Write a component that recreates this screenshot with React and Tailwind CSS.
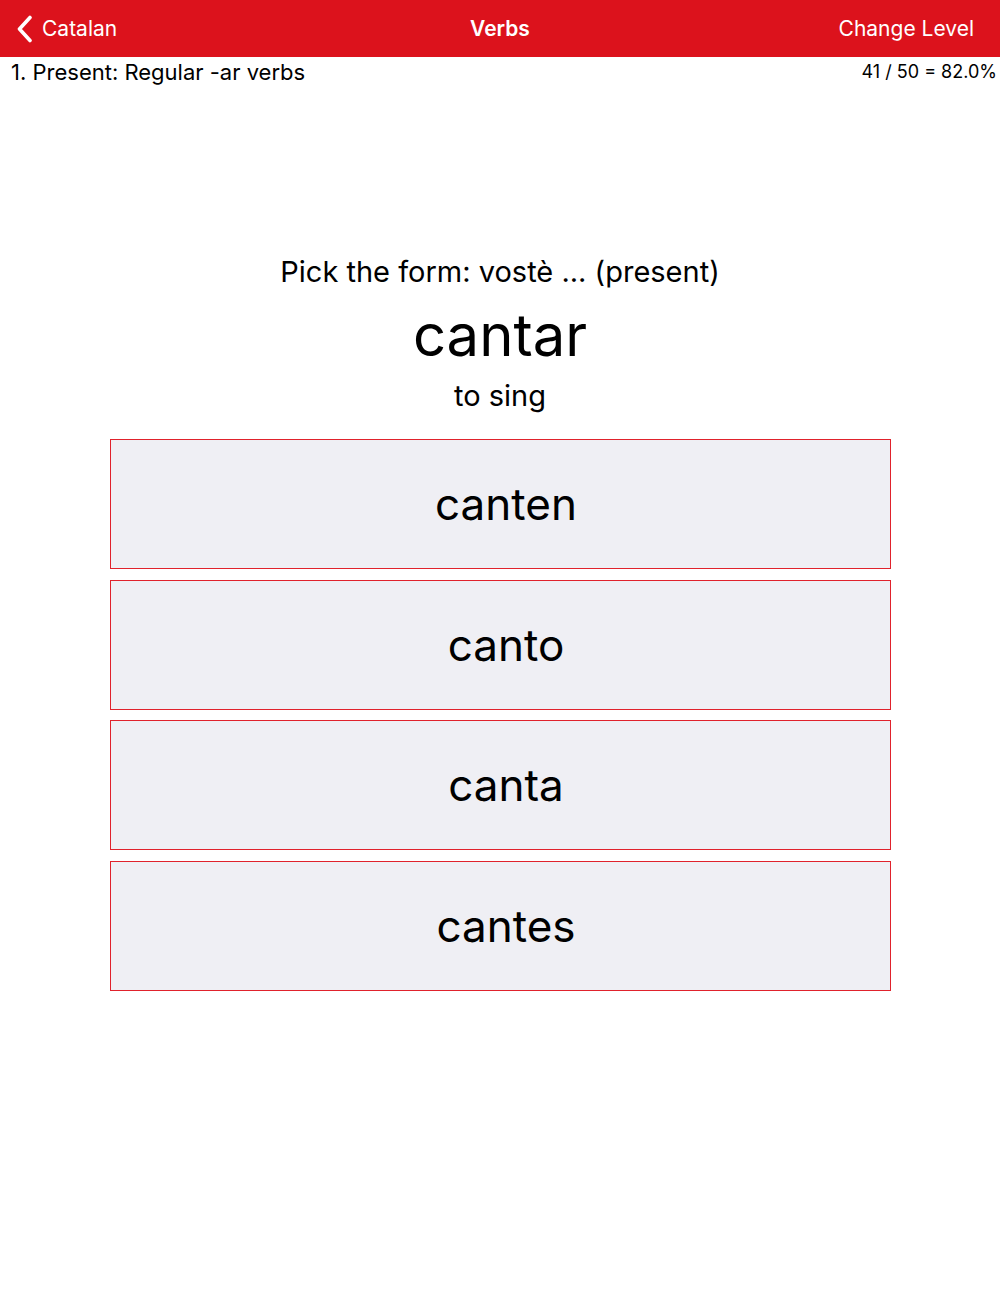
import React from 'react'

const choices = ['canten', 'canto', 'canta', 'cantes']

const App = () => {
  return (
    <div className="min-h-[1307px] bg-white text-black" style={{ fontFamily: 'Inter, "Noto Sans", sans-serif' }}>
      <div className="h-[57px] bg-[#dc121c] text-white flex items-center justify-between pl-[16px] pr-[16px]">
        <div className="flex items-center gap-[9px] w-[200px]">
          <svg width="17" height="28" viewBox="0 0 17 28" fill="none">
            <polyline points="14,2.5 3.5,14 14,25.5" stroke="white" strokeWidth="3.6" strokeLinecap="round" strokeLinejoin="round" />
          </svg>
          <span className="text-[21px] leading-none">Catalan</span>
        </div>
        <div className="text-[21px] font-semibold leading-none">Verbs</div>
        <div className="w-[200px] text-right text-[21px] leading-none pr-[10px]">Change Level</div>
      </div>
      <div className="flex items-center justify-between pl-[11px] pr-[3px] h-[30px]">
        <span className="text-[22px] leading-none">1. Present: Regular -ar verbs</span>
        <span className="text-[18px] leading-none">41 / 50 = 82.0%</span>
      </div>
      <div className="flex flex-col items-center pt-[168px]">
        <div className="text-[29px] leading-[34px]">Pick the form: vostè ... (present)</div>
        <div className="text-[58px] leading-[70px] mt-[11px]">cantar</div>
        <div className="text-[29px] leading-[34px] mt-[9px]">to sing</div>
        <div className="w-[781px] flex flex-col gap-[10.6px] mt-[26px]">
          {choices.map((c) => (
            <div key={c} className="h-[130px] border-[1.5px] border-[#e0222c] bg-[#efeff4] flex items-center justify-center pl-[12px]">
              <span className="text-[44px] leading-none">{c}</span>
            </div>
          ))}
        </div>
      </div>
    </div>
  )
}

export default App
